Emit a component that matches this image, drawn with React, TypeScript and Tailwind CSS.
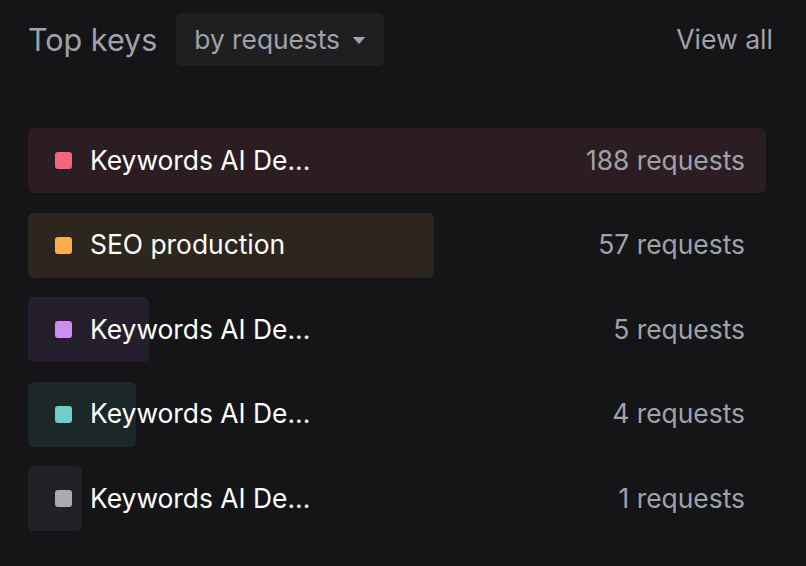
import React from "react";

interface KeyRow {
  name: string;
  count: number;
  dot: string;
  bar: string;
  width: string;
}

const rows: KeyRow[] = [
  { name: "Keywords AI De...", count: 188, dot: "bg-[#f0667e]", bar: "bg-[#2c1d23]", width: "w-full" },
  { name: "SEO production", count: 57, dot: "bg-[#fbad4c]", bar: "bg-[#2c261f]", width: "w-[406px]" },
  { name: "Keywords AI De...", count: 5, dot: "bg-[#d18cf2]", bar: "bg-[#251f2d]", width: "w-[121px]" },
  { name: "Keywords AI De...", count: 4, dot: "bg-[#6ecfc7]", bar: "bg-[#1c2729]", width: "w-[108px]" },
  { name: "Keywords AI De...", count: 1, dot: "bg-[#a9aab1]", bar: "bg-[#222226]", width: "w-[54px]" },
];

const TopKeyRow: React.FC<{ row: KeyRow }> = ({ row }) => {
  return (
    <div className="relative h-[65px]">
      <div className={`absolute inset-y-0 left-0 rounded-md ${row.bar} ${row.width}`} />
      <div className="relative flex h-full items-center pl-[27px] pr-[21px]">
        <span className={`h-[17px] w-[17px] rounded-[3px] ${row.dot}`} />
        <span className="ml-[18px] text-[26.4px] text-white">{row.name}</span>
        <span className="ml-auto text-[26.4px] text-[#a1a1aa]">{row.count} requests</span>
      </div>
    </div>
  );
};

export default function App() {
  return (
    <div
      className="min-h-screen w-full bg-[#151517] px-[28px] pt-[13px]"
      style={{ fontFamily: "Inter, 'Noto Sans', sans-serif" }}
    >
      <div className="flex items-center pr-[5px]">
        <h2 className="text-[30.5px] text-[#a1a1aa]">Top keys</h2>
        <button className="ml-[19px] flex h-[53px] w-[208px] items-center rounded-md bg-[#1f1f22] pl-[18px] text-[26.3px] text-[#a1a1aa]">
          by requests
          <svg width="12" height="7" viewBox="0 0 12 7" className="ml-[13px] mt-[2px]">
            <path d="M0.5 0.5 L11.5 0.5 L6 6.5 Z" fill="#a1a1aa" stroke="#a1a1aa" strokeLinejoin="round" />
          </svg>
        </button>
        <span className="ml-auto text-[26.6px] text-[#a1a1aa]">View all</span>
      </div>
      <div className="mt-[62px] flex w-[738px] flex-col gap-[19.5px]">
        {rows.map((row, i) => (
          <TopKeyRow key={i} row={row} />
        ))}
      </div>
    </div>
  );
}
